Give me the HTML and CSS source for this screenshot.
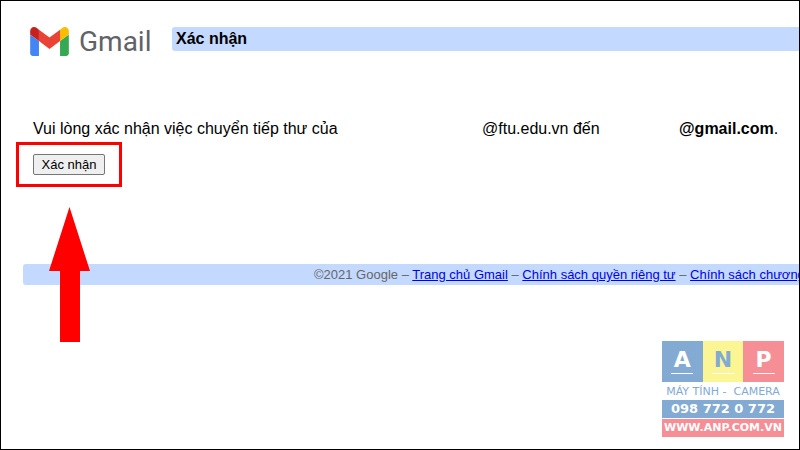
FILE: index.html
```html
<!doctype html>
<html lang="vi">
<head>
	<meta charset="UTF-8">
	<title>Gmail - Xác nhận</title>
	<link rel="stylesheet" href="styles.css">
</head>
<body>
<div class="page">
	<header class="header">
		<div class="logo">
			<svg class="logo-icon" viewBox="52 42 88 66" aria-hidden="true">
				<path fill="#4285f4" d="M58 108h14V74L52 59v43c0 3.320 2.690 6 6 6"/>
				<path fill="#34a853" d="M120 108h14c3.320 0 6-2.690 6-6V59l-20 15"/>
				<path fill="#fbbc04" d="M120 48v26l20-15v-8c0-7.420-8.470-11.650-14.400-7.200"/>
				<path fill="#ea4335" d="M72 74V48l24 18 24-18v26L96 92"/>
				<path fill="#c5221f" d="M52 51v8l20 15V48l-5.600-4.200c-5.940-4.450-14.400-.22-14.400 7.200"/>
			</svg>
			<span class="logo-text">Gmail</span>
		</div>
		<h1 class="title">Xác nhận</h1>
	</header>

	<main class="content">
		<p class="message">
			<span class="from">Vui lòng xác nhận việc chuyển tiếp thư của</span>
			<span class="to">@ftu.edu.vn đến</span>
			<span><b>@gmail.com</b>.</span>
		</p>
		<div class="confirm">
			<button type="button" class="btn">Xác nhận</button>
			<div class="mark"></div>
			<svg class="arrow" viewBox="0 0 41 135" aria-hidden="true">
				<path fill="#f00" d="M20.500 0L41 64H31v71H11V64H0z"/>
			</svg>
		</div>
	</main>

	<footer class="footer">
		©2021 Google – <a href="#">Trang chủ Gmail</a> – <a href="#">Chính sách quyền riêng tư</a> – <a href="#">Chính sách chương trình</a>
	</footer>

	<div class="anp">
		<div class="anp-letters">
			<span class="blue">A</span>
			<span class="yellow">N</span>
			<span class="red">P</span>
		</div>
		<div class="anp-name">MÁY TÍNH -&nbsp; CAMERA</div>
		<div class="anp-phone">098 772 0 772</div>
		<div class="anp-site">WWW.ANP.COM.VN</div>
	</div>
</div>
</body>
</html>
```
FILE: styles.css
```css
*{
	margin: 0;
	padding: 0;
	box-sizing: border-box;
}
body {
	font-family: "Liberation Sans", Arial, sans-serif;
	font-size: 16px;
	color: #000;
	background: #fff;
}

.page {
	position: relative;
	min-height: 100vh;
	padding-top: 26px;
	border: 1px solid #000;
	overflow: hidden;
}

.header {
	display: flex;
	align-items: flex-start;
	padding-left: 29px;
}
.logo {
	display: flex;
	align-items: center;
	gap: 10px;
	width: 142px;
	height: 29px;
}
.logo-icon {
	width: 39px;
	height: 29px;
}
.logo-text {
	font-family: Roboto, sans-serif;
	font-size: 28px;
	line-height: 29px;
	color: #5f6368;
}
.title {
	flex: 1;
	padding-left: 4px;
	font-size: 16px;
	line-height: 24px;
	background: #c3d9ff;
	border-radius: 3px 0 0 3px;
}

.content {
	padding: 61px 0 0 32px;
}
.message {
	display: flex;
	line-height: 24px;
	white-space: nowrap;
}
.from {
	width: 449px;
}
.to {
	width: 197px;
}

.confirm {
	position: relative;
	display: inline-block;
	margin-top: 13px;
}
.btn {
	display: block;
	width: 72px;
	height: 21px;
	font-family: inherit;
	font-size: 13px;
	line-height: 18px;
	color: #000;
	background: #efefef;
	border: 1px solid #767676;
	border-radius: 2px;
}
.mark {
	position: absolute;
	top: -12px;
	left: -17px;
	width: 106px;
	height: 45px;
	border: 3px solid #f00;
}
.arrow {
	position: absolute;
	top: 53px;
	left: 16px;
	z-index: 1;
	width: 41px;
	height: 135px;
}

.footer {
	margin: 89px 0 0 22px;
	padding-left: 291px;
	font-size: 13px;
	line-height: 21px;
	color: #666;
	white-space: nowrap;
	overflow: hidden;
	background: #c3d9ff;
	border-radius: 3px 0 0 3px;
}
.footer a {
	color: #00e;
}

/* watermark */
.anp {
	position: absolute;
	right: 15px;
	bottom: 12px;
	width: 122px;
	font-family: "DejaVu Sans", sans-serif;
	text-align: center;
	white-space: nowrap;
	color: #fff;
}
.anp-letters {
	display: flex;
	height: 41px;
}
.anp-letters span {
	flex: 1;
	font-size: 22px;
	font-weight: bold;
	line-height: 38px;
}
.anp-letters span:after {
	content: "";
	display: block;
	width: 22px;
	height: 1px;
	margin: -6px auto 0;
	background: #fff;
}
.blue {
	background: #82aad3;
}
.yellow {
	color: #82aad3;
	background: #fbf593;
}
.red {
	background: #f68e95;
}
.anp-name {
	padding-top: 2px;
	font-size: 11px;
	line-height: 16px;
	color: #82aad3;
}
.anp-phone {
	font-size: 13px;
	font-weight: bold;
	line-height: 18px;
	background: #82aad3;
}
.anp-site {
	margin-top: 1px;
	font-size: 11px;
	font-weight: bold;
	line-height: 18px;
	background: #f68e95;
}
```
